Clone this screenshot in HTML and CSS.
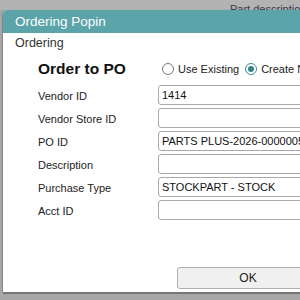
FILE: index.html
```html
<!DOCTYPE html>
<html lang="en">
<head>
    <meta charset="UTF-8">
    <meta name="viewport" content="width=device-width, initial-scale=1.0">
    <title>Ordering Popin</title>
    <link rel="stylesheet" href="styles.css">
</head>
<body>

<!-- page behind the overlay -->
<div class="behind">
    <span class="behind-label">Part description:</span>
</div>

<div class="popin">
    <div class="popin-title">Ordering Popin</div>

    <div class="popin-body">
        <div class="section-name">Ordering</div>

        <div class="form">
            <div class="row head-row">
                <div class="label order-title">Order to PO</div>
                <div class="radios">
                    <label class="radio"><span class="dot"></span>Use Existing</label>
                    <label class="radio"><span class="dot checked"></span>Create New</label>
                </div>
            </div>
            <div class="row">
                <div class="label">Vendor ID</div>
                <input type="text" class="field" value="1414">
            </div>
            <div class="row">
                <div class="label">Vendor Store ID</div>
                <input type="text" class="field" value="">
            </div>
            <div class="row">
                <div class="label">PO ID</div>
                <input type="text" class="field" value="PARTS PLUS-2026-0000005">
            </div>
            <div class="row">
                <div class="label">Description</div>
                <input type="text" class="field" value="">
            </div>
            <div class="row">
                <div class="label">Purchase Type</div>
                <input type="text" class="field" value="STOCKPART - STOCK">
            </div>
            <div class="row">
                <div class="label">Acct ID</div>
                <input type="text" class="field" value="">
            </div>
        </div>
    </div>

    <div class="popin-footer">
        <button class="ok-button">OK</button>
    </div>
</div>

</body>
</html>
```

FILE: styles.css
```css
body {
    margin: 0;
    width: 300px;
    height: 300px;
    overflow: hidden;
    background-color: #a7a7a7;
    font-family: "Liberation Sans", Arial, sans-serif;
    color: #222;
}
.behind {
    height: 10px;
    overflow: hidden;
    background-color: #b3b3b3;
    padding-left: 230px;
    box-sizing: border-box;
}
.behind-label {
    display: block;
    font-size: 11px;
    line-height: 14px;
    padding-top: 2px;
    color: #3a3a4a;
    white-space: nowrap;
}
.popin {
    margin-left: 3px;
    width: 330px;
    height: 282px;
    background-color: #fff;
    border-radius: 5px 5px 0 0;
    display: flex;
    flex-direction: column;
    box-shadow: 0 2px 0 #767676, -1px 0 1px rgba(0, 0, 0, 0.2);
}
.popin-title {
    height: 23px;
    line-height: 23px;
    padding-left: 12px;
    background-color: #5ba4a9;
    color: #fff;
    font-size: 13.5px;
    border-radius: 5px 5px 0 0;
}
.popin-body {
    flex: 1;
    padding: 3px 0 0 12px;
}
.section-name {
    font-size: 12.5px;
    line-height: 15px;
    color: #333;
}
.form {
    margin-top: 8px;
    padding-left: 23px;
    display: flex;
    flex-direction: column;
    gap: 3px;
}
.row {
    display: flex;
    align-items: center;
    height: 20px;
}
.head-row {
    margin-bottom: 3px;
}
.label {
    width: 120px;
    flex-shrink: 0;
    font-size: 11px;
    padding-top: 2px;
    color: #222;
}
.order-title {
    font-size: 15.5px;
    font-weight: bold;
    padding-top: 0;
    color: #111;
}
.radios {
    display: flex;
    align-items: center;
    padding-left: 4px;
    gap: 6px;
}
.radio {
    display: flex;
    align-items: center;
    font-size: 11px;
    white-space: nowrap;
}
.dot {
    width: 10px;
    height: 10px;
    border: 1px solid #777;
    border-radius: 50%;
    background-color: #fff;
    margin-right: 4px;
    position: relative;
}
.dot.checked {
    border-color: #3d8f93;
}
.dot.checked::after {
    content: "";
    position: absolute;
    left: 2px;
    top: 2px;
    width: 6px;
    height: 6px;
    border-radius: 50%;
    background-color: #2f8488;
}
.field {
    width: 180px;
    height: 20px;
    box-sizing: border-box;
    border: 1px solid #a9a9a9;
    border-radius: 3px;
    padding: 0 3px;
    font-family: "Liberation Sans", Arial, sans-serif;
    font-size: 11px;
    color: #111;
    background-color: #fff;
}
.popin-footer {
    padding: 0 0 3px 174px;
}
.ok-button {
    width: 142px;
    height: 22px;
    border: 1px solid #b0b0b0;
    border-radius: 3px;
    background-color: #f0f0f0;
    font-family: "Liberation Sans", Arial, sans-serif;
    font-size: 12px;
    color: #222;
}
```
